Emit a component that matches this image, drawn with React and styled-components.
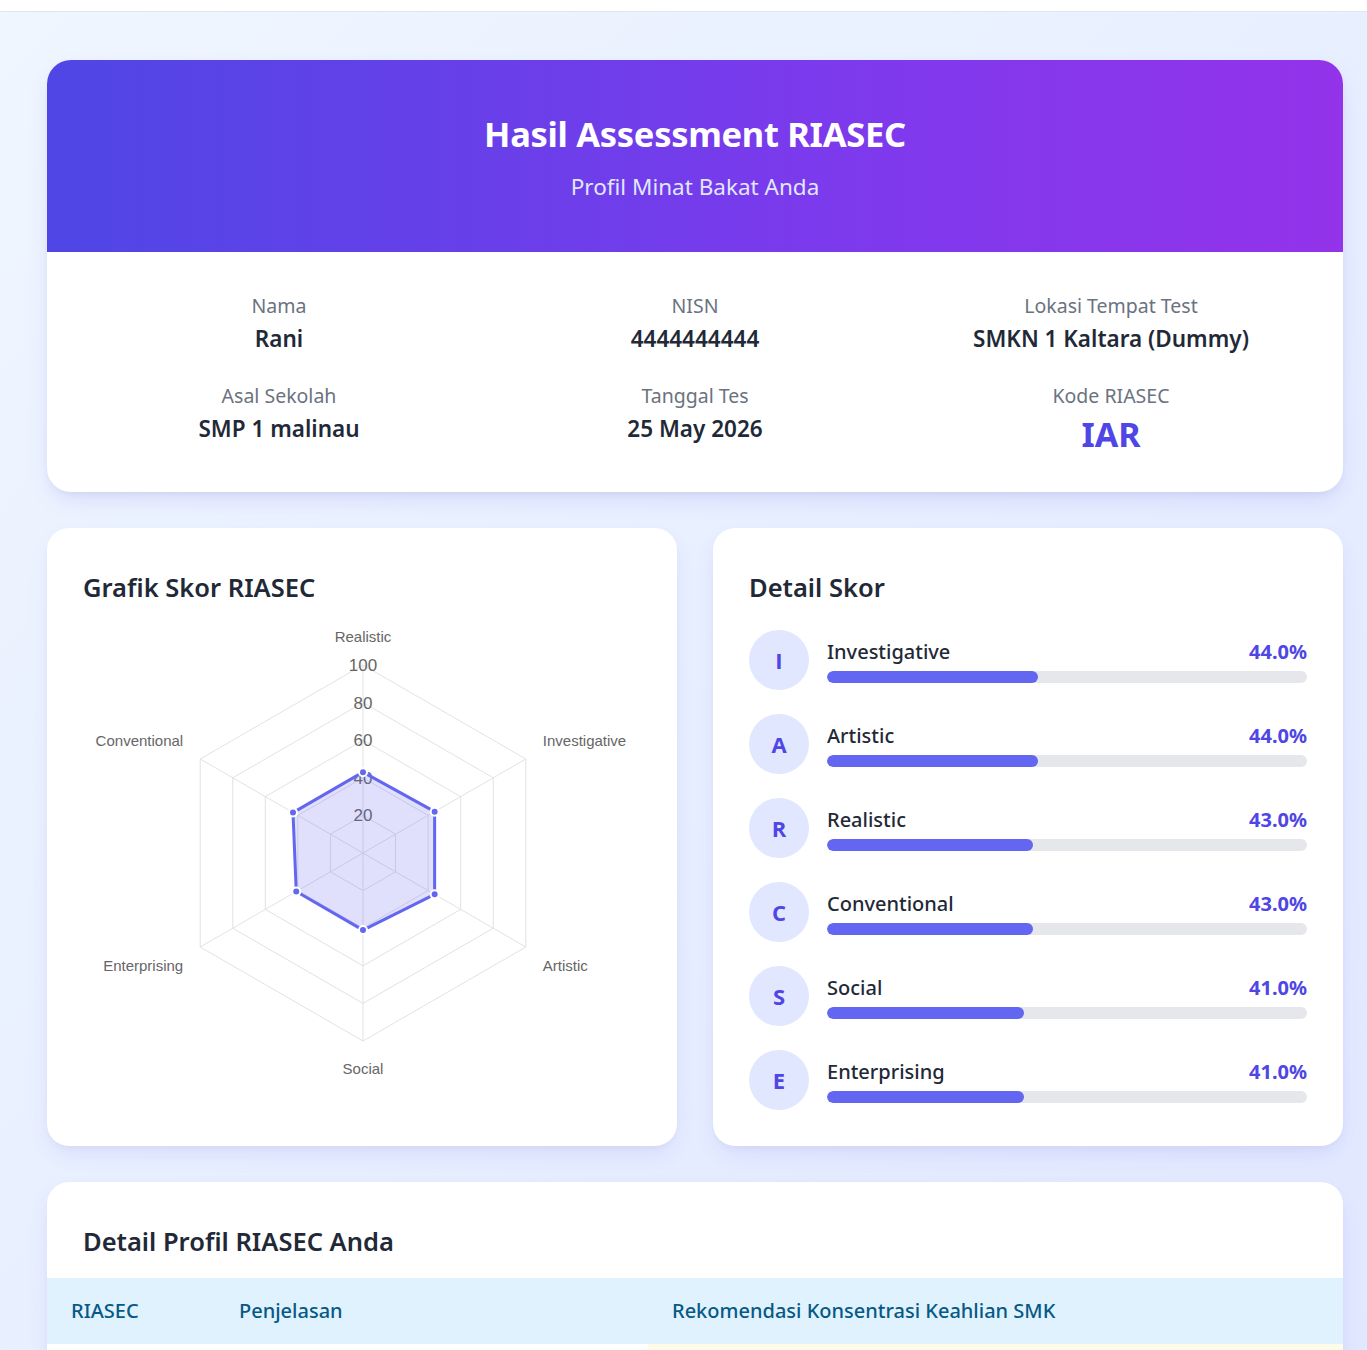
import React from 'react'
import styled, { createGlobalStyle } from 'styled-components'

const GlobalStyle = createGlobalStyle`
    * { box-sizing: border-box; }
    body {
        margin: 0;
        font-family: "Noto Sans", "Open Sans", sans-serif;
        background: linear-gradient(135deg, #eff6ff 0%, #e0e7ff 100%);
        min-height: 100vh;
        color: #1f2937;
    }
`;

const student = [
    { label: 'Nama', value: 'Rani' },
    { label: 'NISN', value: '4444444444' },
    { label: 'Lokasi Tempat Test', value: 'SMKN 1 Kaltara (Dummy)' },
    { label: 'Asal Sekolah', value: 'SMP 1 malinau' },
    { label: 'Tanggal Tes', value: '25 May 2026' },
    { label: 'Kode RIASEC', value: 'IAR', code: true },
]

const scores = [
    { key: 'I', name: 'Investigative', value: 44 },
    { key: 'A', name: 'Artistic', value: 44 },
    { key: 'R', name: 'Realistic', value: 43 },
    { key: 'C', name: 'Conventional', value: 43 },
    { key: 'S', name: 'Social', value: 41 },
    { key: 'E', name: 'Enterprising', value: 41 },
]

// radar order, clockwise from the top
const axes = [
    { name: 'Realistic', value: 43, anchor: 'middle', dx: 0, dy: -28 },
    { name: 'Investigative', value: 44, anchor: 'start', dx: 17, dy: -18 },
    { name: 'Artistic', value: 44, anchor: 'start', dx: 17, dy: 19 },
    { name: 'Social', value: 41, anchor: 'middle', dx: 0, dy: 28 },
    { name: 'Enterprising', value: 41, anchor: 'end', dx: -17, dy: 19 },
    { name: 'Conventional', value: 43, anchor: 'end', dx: -17, dy: -18 },
]

const CX = 280
const CY = 233
const R = 188

const point = (i, r) => {
    const a = (Math.PI / 3) * i - Math.PI / 2
    return [CX + r * Math.cos(a), CY + r * Math.sin(a)]
}

const ring = (r) => axes.map((_, i) => point(i, r).join(',')).join(' ')

const RadarChart = () => {
    const data = axes.map((a, i) => point(i, (a.value / 100) * R))
    return (
        <svg width="558" height="490" viewBox="0 0 558 490">
            {[20, 40, 60, 80, 100].map(t => (
                <polygon key={t} points={ring((t / 100) * R)} fill="none" stroke="#e2e2e2" strokeWidth="1" />
            ))}
            {axes.map((a, i) => {
                const [x, y] = point(i, R)
                return <line key={a.name} x1={CX} y1={CY} x2={x} y2={y} stroke="#e2e2e2" strokeWidth="1" />
            })}
            {[20, 40, 60, 80, 100].map(t => (
                <text key={t} x={CX} y={CY - (t / 100) * R + 6} textAnchor="middle"
                    fontFamily="'Liberation Sans', Arial, sans-serif" fontSize="17" fill="#666">{t}</text>
            ))}
            <polygon points={data.map(p => p.join(',')).join(' ')}
                fill="rgba(99, 102, 241, 0.2)" stroke="#6366f1" strokeWidth="3" strokeLinejoin="round" />
            {data.map(([x, y], i) => (
                <circle key={i} cx={x} cy={y} r="4" fill="#6366f1" stroke="#fff" strokeWidth="2" />
            ))}
            {axes.map((a, i) => {
                const [x, y] = point(i, R)
                return (
                    <text key={a.name} x={x + a.dx} y={y + a.dy + 5} textAnchor={a.anchor}
                        fontFamily="'Liberation Sans', Arial, sans-serif" fontSize="15" fill="#666">{a.name}</text>
                )
            })}
        </svg>
    )
}

const App = () => {
    return (
        <>
            <GlobalStyle />
            <TopBar />
            <Page>
                <HeaderCard>
                    <Hero>
                        <HeroTitle>Hasil Assessment RIASEC</HeroTitle>
                        <HeroSub>Profil Minat Bakat Anda</HeroSub>
                    </Hero>
                    <InfoGrid>
                        {student.map(s => (
                            <InfoItem key={s.label}>
                                <InfoLabel>{s.label}</InfoLabel>
                                <InfoValue $code={s.code}>{s.value}</InfoValue>
                            </InfoItem>
                        ))}
                    </InfoGrid>
                </HeaderCard>

                <TwoCols>
                    <Card>
                        <CardTitle>Grafik Skor RIASEC</CardTitle>
                        <ChartBox>
                            <RadarChart />
                        </ChartBox>
                    </Card>
                    <Card>
                        <CardTitle>Detail Skor</CardTitle>
                        <ScoreList>
                            {scores.map(s => (
                                <ScoreRow key={s.key}>
                                    <Badge>{s.key}</Badge>
                                    <ScoreBody>
                                        <ScoreHead>
                                            <ScoreName>{s.name}</ScoreName>
                                            <ScorePct>{s.value.toFixed(1)}%</ScorePct>
                                        </ScoreHead>
                                        <Track>
                                            <Fill style={{ width: `${s.value}%` }} />
                                        </Track>
                                    </ScoreBody>
                                </ScoreRow>
                            ))}
                        </ScoreList>
                    </Card>
                </TwoCols>

                <TableCard>
                    <TableTitle>Detail Profil RIASEC Anda</TableTitle>
                    <Table>
                        <thead>
                            <tr>
                                <Th $w={168}>RIASEC</Th>
                                <Th $w={433}>Penjelasan</Th>
                                <Th>Rekomendasi Konsentrasi Keahlian SMK</Th>
                            </tr>
                        </thead>
                        <tbody>
                            <tr>
                                <Td><CodeCell>I</CodeCell></Td>
                                <Td>Investigative: senang menganalisis, meneliti dan memecahkan masalah secara logis.</Td>
                                <Td $rec>Teknik Komputer dan Jaringan, Rekayasa Perangkat Lunak, Analisis Kimia</Td>
                            </tr>
                        </tbody>
                    </Table>
                </TableCard>
            </Page>
        </>
    )
}

export default App

const TopBar = styled.div`
    height: 12px;
    background: #fff;
    border-bottom: 1px solid #e2e6ee;
`;

const Page = styled.div`
    padding: 48px 24px 48px 47px;
    display: flex;
    flex-direction: column;
    gap: 36px;
`;

const HeaderCard = styled.div`
    background: #fff;
    border-radius: 24px;
    overflow: hidden;
    box-shadow: 0 10px 25px -5px rgba(79, 70, 229, 0.15), 0 4px 10px -4px rgba(0, 0, 0, 0.08);
`;

const Hero = styled.div`
    height: 192px;
    background: linear-gradient(90deg, #4f46e5 0%, #7c3aed 60%, #9333ea 100%);
    color: #fff;
    text-align: center;
    padding-top: 52px;
`;

const HeroTitle = styled.h1`
    margin: 0;
    font-size: 34.5px;
    font-weight: 700;
    line-height: 44px;
    letter-spacing: -0.3px;
`;

const HeroSub = styled.div`
    margin-top: 16px;
    font-size: 22.5px;
    line-height: 30px;
    color: #e0e7ff;
`;

const InfoGrid = styled.div`
    display: grid;
    grid-template-columns: repeat(3, 1fr);
    column-gap: 32px;
    row-gap: 27px;
    padding: 40px 40px 37px;
`;

const InfoItem = styled.div`
    text-align: center;
`;

const InfoLabel = styled.div`
    font-size: 19.5px;
    line-height: 27px;
    color: #6b7280;
`;

const InfoValue = styled.div`
    margin-top: ${p => (p.$code ? '5px' : '3px')};
    font-size: ${p => (p.$code ? '34px' : '22.5px')};
    line-height: ${p => (p.$code ? '41px' : '33px')};
    font-weight: ${p => (p.$code ? 700 : 600)};
    color: ${p => (p.$code ? '#4f46e5' : '#1f2937')};
`;

const TwoCols = styled.div`
    display: grid;
    grid-template-columns: 1fr 1fr;
    gap: 36px;
`;

const Card = styled.div`
    background: #fff;
    border-radius: 22px;
    padding: 40px 36px 36px;
    box-shadow: 0 10px 25px -5px rgba(79, 70, 229, 0.12), 0 4px 10px -4px rgba(0, 0, 0, 0.06);
`;

const CardTitle = styled.h2`
    margin: 0 0 23px;
    font-size: 25.5px;
    line-height: 39px;
    font-weight: 600;
    color: #1f2937;
`;

const ChartBox = styled.div`
    display: flex;
    justify-content: center;
    margin-top: -10px;
`;

const ScoreList = styled.div`
    display: flex;
    flex-direction: column;
    gap: 24px;
`;

const ScoreRow = styled.div`
    display: flex;
    align-items: center;
    gap: 18px;
`;

const Badge = styled.div`
    width: 60px;
    height: 60px;
    flex-shrink: 0;
    border-radius: 50%;
    background: #e0e7ff;
    color: #4f46e5;
    font-family: "Open Sans", sans-serif;
    font-size: 22px;
    font-weight: 700;
    display: grid;
    place-items: center;
`;

const ScoreBody = styled.div`
    flex: 1;
    display: flex;
    flex-direction: column;
    gap: 4px;
`;

const ScoreHead = styled.div`
    display: flex;
    justify-content: space-between;
    align-items: center;
`;

const ScoreName = styled.span`
    font-size: 20px;
    line-height: 30px;
    font-weight: 500;
    color: #1f2937;
`;

const ScorePct = styled.span`
    font-size: 20px;
    line-height: 30px;
    font-weight: 700;
    color: #4f46e5;
`;

const Track = styled.div`
    height: 12px;
    border-radius: 6px;
    background: #e5e7eb;
    overflow: hidden;
`;

const Fill = styled.div`
    height: 100%;
    border-radius: 6px;
    background: #6366f1;
`;

const TableCard = styled.div`
    background: #fff;
    border-radius: 22px;
    overflow: hidden;
    box-shadow: 0 10px 25px -5px rgba(79, 70, 229, 0.12), 0 4px 10px -4px rgba(0, 0, 0, 0.06);
`;

const TableTitle = styled.h2`
    margin: 0;
    padding: 40px 36px 17px;
    font-size: 25.5px;
    line-height: 39px;
    font-weight: 600;
    color: #1f2937;
`;

const Table = styled.table`
    width: 100%;
    border-collapse: collapse;
    table-layout: fixed;
`;

const Th = styled.th`
    width: ${p => (p.$w ? `${p.$w}px` : 'auto')};
    background: #e0f2fe;
    color: #075985;
    text-align: left;
    font-size: 20px;
    font-weight: 500;
    line-height: 30px;
    padding: 18px 24px;
`;

const Td = styled.td`
    padding: 24px 24px;
    font-size: 17px;
    line-height: 26px;
    color: #374151;
    vertical-align: top;
    background: ${p => (p.$rec ? '#fefce8' : '#fff')};
`;

const CodeCell = styled.span`
    font-weight: 700;
    color: #4f46e5;
    font-size: 22px;
`;
